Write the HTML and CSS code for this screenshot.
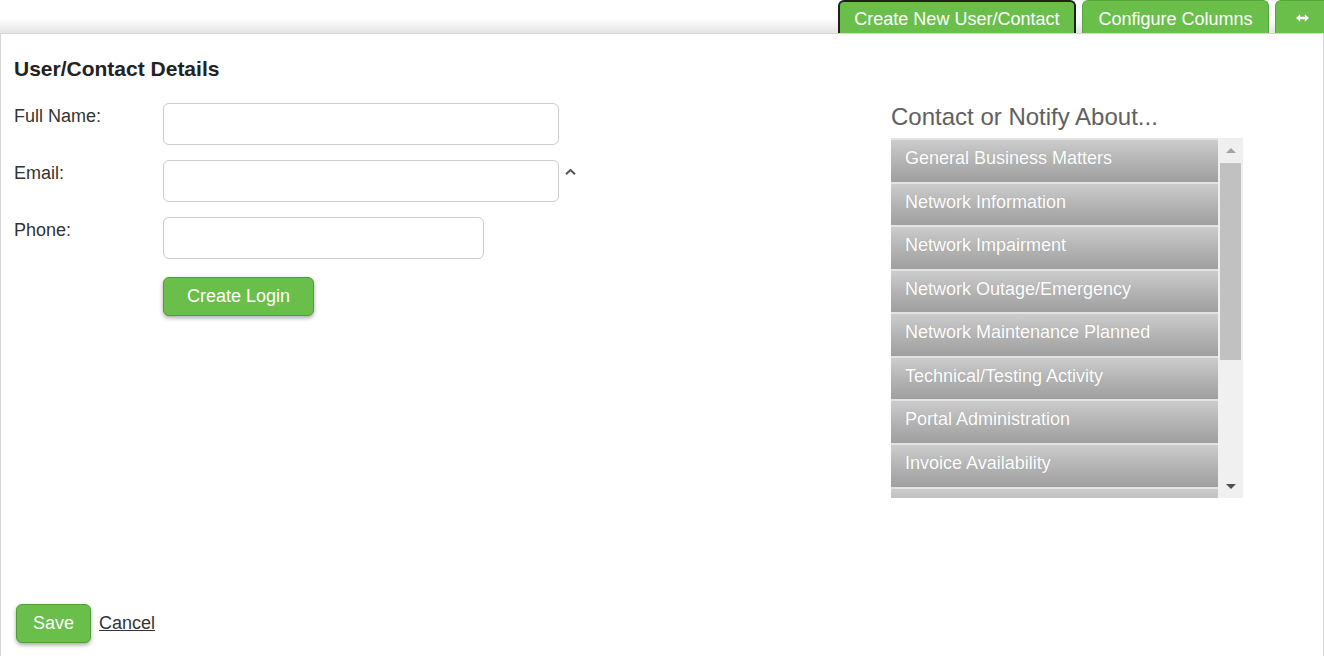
FILE: index.html
```html
<!DOCTYPE html>
<html lang="en">
<head>
<meta charset="utf-8">
<title>User/Contact Details</title>
<link rel="stylesheet" href="styles.css">
</head>
<body>
<div class="page">
  <nav class="tabbar">
    <button class="tab tab-active" type="button">Create New User/Contact</button>
    <button class="tab" type="button">Configure Columns</button>
    <button class="tab tab-icon" type="button" aria-label="Expand">
      <svg class="swap-icon" width="13" height="8" viewBox="0 0 13 8"><path d="M0 4 L4.2 0.3 V2.7 H8.8 V0.3 L13 4 L8.8 7.7 V5.3 H4.2 V7.7 Z" fill="#ffffff"/></svg>
    </button>
  </nav>

  <section class="panel">
    <div class="panel-body">
      <h2 class="title">User/Contact Details</h2>

      <div class="form">
        <div class="row">
          <label class="label" for="fullname">Full Name:</label>
          <input class="input input-wide" id="fullname" type="text">
        </div>
        <div class="row">
          <label class="label" for="email">Email:</label>
          <input class="input input-wide" id="email" type="text">
          <svg class="caret" width="11" height="6" viewBox="0 0 11 6"><polyline points="1,5.2 5.5,1 10,5.2" fill="none" stroke="#555" stroke-width="2"/></svg>
        </div>
        <div class="row">
          <label class="label" for="phone">Phone:</label>
          <input class="input input-mid" id="phone" type="text">
        </div>
        <div class="row row-action">
          <span class="label"></span>
          <button class="btn" type="button">Create Login</button>
        </div>
      </div>

      <div class="notify">
        <h3 class="notify-title">Contact or Notify About...</h3>
        <div class="list">
          <ul class="items">
            <li class="item">General Business Matters</li>
            <li class="item">Network Information</li>
            <li class="item">Network Impairment</li>
            <li class="item">Network Outage/Emergency</li>
            <li class="item">Network Maintenance Planned</li>
            <li class="item">Technical/Testing Activity</li>
            <li class="item">Portal Administration</li>
            <li class="item">Invoice Availability</li>
            <li class="item"></li>
          </ul>
          <div class="scrollbar">
            <div class="sb-btn"><span class="arrow-up"></span></div>
            <div class="sb-track"><div class="sb-thumb"></div></div>
            <div class="sb-btn"><span class="arrow-down"></span></div>
          </div>
        </div>
      </div>
    </div>

    <footer class="panel-footer">
      <button class="btn btn-save" type="button">Save</button>
      <a class="cancel" href="#">Cancel</a>
    </footer>
  </section>
</div>
</body>
</html>
```

FILE: styles.css
```css
html, body {
  margin: 0;
  padding: 0;
  height: 100%;
  overflow: hidden;
  background: #ffffff;
}

body {
  font-family: "Liberation Sans", Arial, sans-serif;
  font-size: 18px;
  color: #333333;
}

.page {
  display: flex;
  flex-direction: column;
  height: 100vh;
}

/* ---------- tabs ---------- */
.tabbar {
  display: flex;
  justify-content: flex-end;
  align-items: flex-end;
  gap: 6px;
  height: 33px;
  margin-right: -6px;
  background: linear-gradient(to bottom, #ffffff 0%, #ffffff 55%, #e4e4e4 100%);
  flex-shrink: 0;
}

.tab {
  box-sizing: border-box;
  height: 33px;
  margin: 0;
  padding: 4px 15.5px 0;
  font-family: inherit;
  font-size: 18px;
  line-height: 21px;
  color: #ffffff;
  background: #6abf4b;
  border: 1px solid #56a53c;
  border-bottom: none;
  border-radius: 6px 6px 0 0;
  white-space: nowrap;
  display: block;
  cursor: pointer;
}

.tab-active {
  border: 2px solid #1f1f1f;
  border-bottom: none;
  padding-top: 3px;
  padding-left: 14.5px;
  padding-right: 14.5px;
}

.tab-icon {
  padding: 0 20px;
  display: flex;
  align-items: center;
  padding-top: 1px;
}

.swap-icon {
  display: block;
}

/* ---------- panel ---------- */
.panel {
  flex: 1;
  display: flex;
  flex-direction: column;
  border: 1px solid #d6d6d6;
  border-bottom: none;
  background: #ffffff;
  min-height: 0;
}

.panel-body {
  flex: 1;
  display: grid;
  grid-template-columns: 1fr 352px;
  grid-template-rows: auto 1fr;
  padding: 23px 80px 0 13px;
  align-items: start;
}

.title {
  grid-column: 1 / -1;
  margin: 0 0 22px;
  font-size: 21px;
  line-height: 24px;
  font-weight: bold;
  color: #222222;
}

/* ---------- form ---------- */
.form {
  display: flex;
  flex-direction: column;
  gap: 15px;
}

.row {
  display: flex;
  align-items: flex-start;
}

.row-action {
  margin-top: 3px;
}

.label {
  width: 149px;
  flex-shrink: 0;
  padding-top: 3px;
  font-size: 18px;
  line-height: 21px;
  color: #333333;
}

.input {
  box-sizing: border-box;
  height: 42px;
  margin: 0;
  padding: 6px 12px;
  border: 1px solid #cccccc;
  border-radius: 6px;
  background: #ffffff;
  font-family: inherit;
  font-size: 18px;
  color: #333333;
}

.input-wide {
  width: 396px;
}

.input-mid {
  width: 321px;
}

.caret {
  display: block;
  margin: 9px 0 0 6px;
}

.btn {
  box-sizing: border-box;
  height: 39px;
  margin: 0;
  padding: 0 23px;
  font-family: inherit;
  font-size: 18px;
  line-height: 21px;
  color: #ffffff;
  background: #6abf4b;
  border: 1px solid #4f9e37;
  border-radius: 6px;
  box-shadow: 0 2px 4px rgba(0, 0, 0, 0.35);
  cursor: pointer;
}

/* ---------- notify list ---------- */
.notify {
  display: flex;
  flex-direction: column;
  gap: 7px;
}

.notify-title {
  margin: 0;
  font-size: 24px;
  line-height: 28px;
  font-weight: normal;
  color: #606060;
}

.list {
  display: flex;
  height: 360px;
}

.items {
  width: 327px;
  margin: 0;
  padding: 0;
  list-style: none;
  overflow: hidden;
}

.item {
  box-sizing: border-box;
  height: 43.57px;
  padding: 8px 14px 0;
  border-top: 2px solid #e3e3e3;
  background: linear-gradient(to bottom, #cccccc 0%, #b4b4b4 50%, #9f9f9f 100%);
  font-size: 18px;
  line-height: 21px;
  color: #ffffff;
  text-shadow: 0 0 1px rgba(0, 0, 0, 0.15);
  white-space: nowrap;
}

.scrollbar {
  width: 25px;
  display: flex;
  flex-direction: column;
  background: #f0f0f0;
}

.sb-btn {
  height: 24px;
  display: flex;
  align-items: center;
  justify-content: center;
  flex-shrink: 0;
}

.arrow-up {
  width: 0;
  height: 0;
  border-left: 5.5px solid transparent;
  border-right: 5.5px solid transparent;
  border-bottom: 5px solid #a3a3a3;
}

.arrow-down {
  width: 0;
  height: 0;
  border-left: 5.5px solid transparent;
  border-right: 5.5px solid transparent;
  border-top: 5px solid #505050;
}

.sb-track {
  flex: 1;
  padding: 1px 2px 0 2px;
}

.sb-thumb {
  height: 197px;
  background: #c1c1c1;
}

/* ---------- footer ---------- */
.panel-footer {
  display: flex;
  align-items: center;
  gap: 8px;
  padding: 0 0 13px 15px;
}

.btn-save {
  padding: 0 16px;
}

.cancel {
  font-size: 18px;
  line-height: 21px;
  color: #333333;
  text-decoration: underline;
}
```
